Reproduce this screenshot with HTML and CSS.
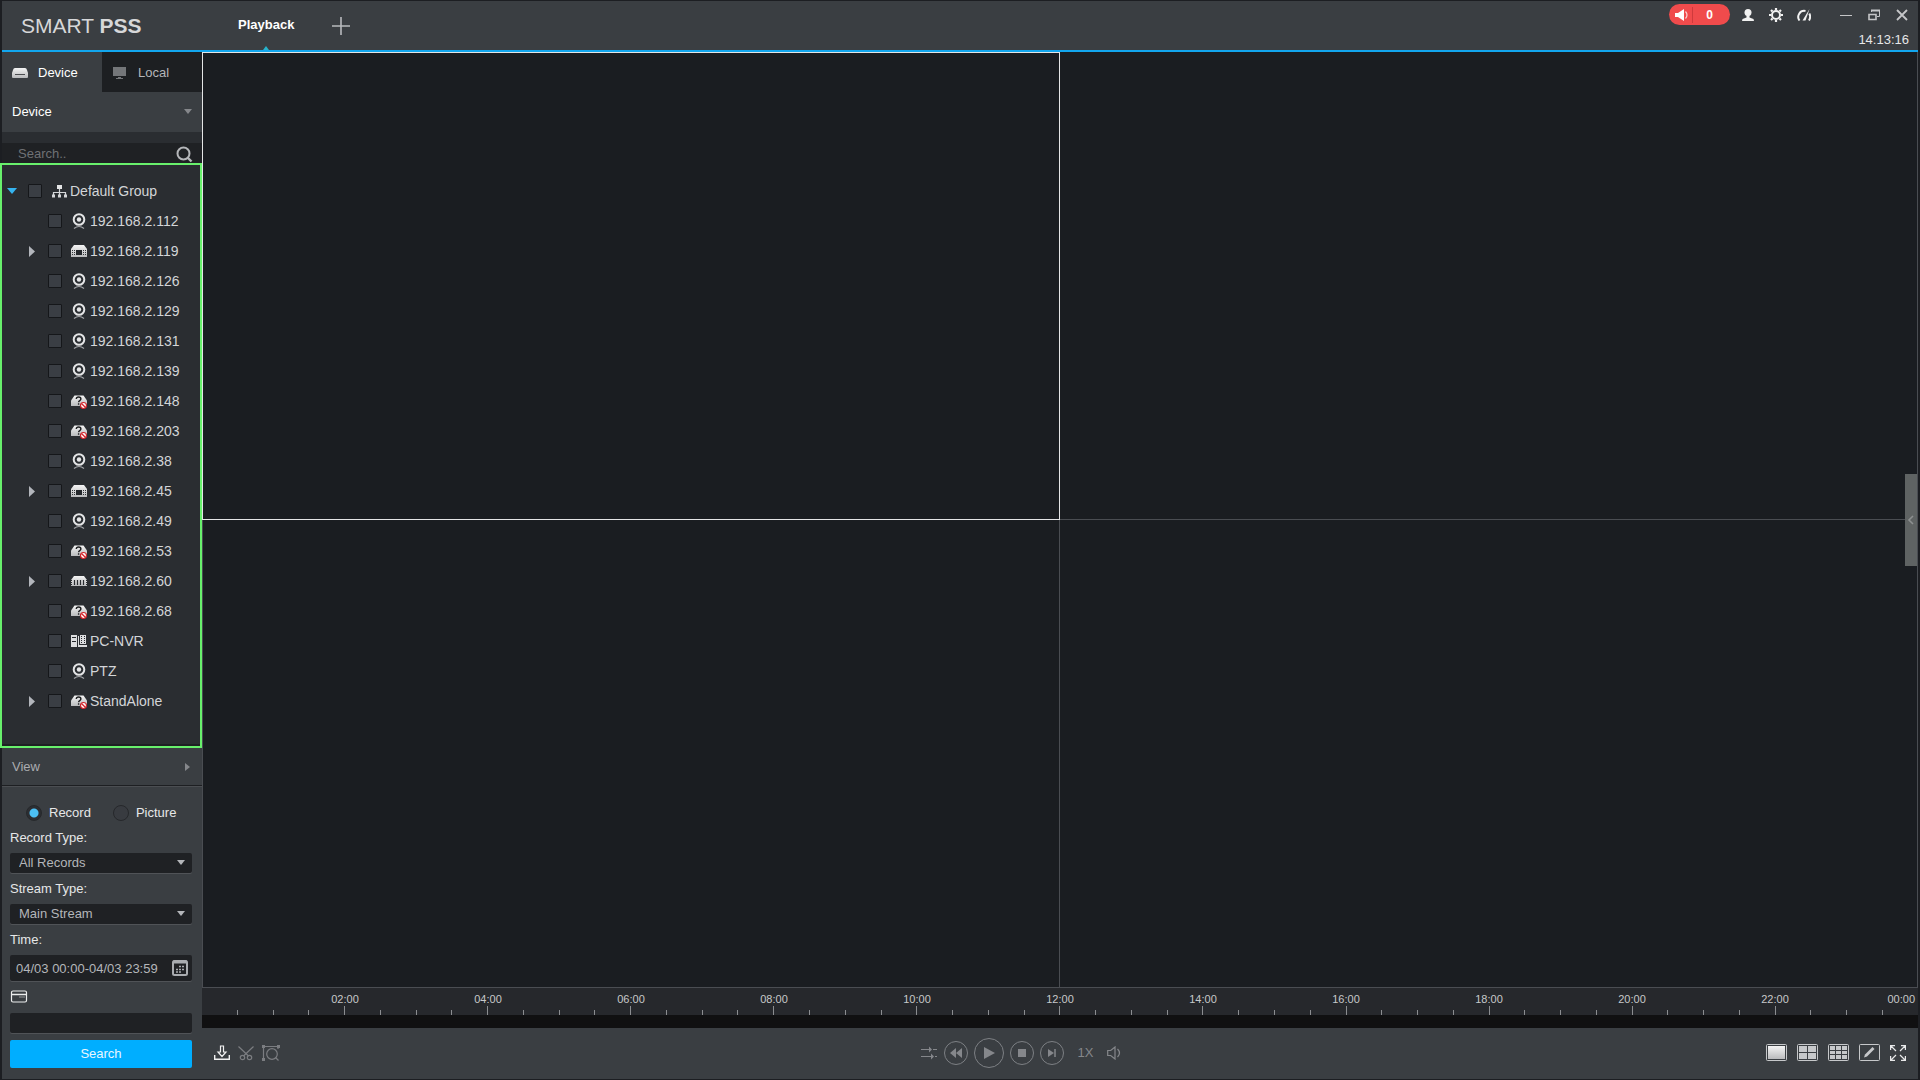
FILE: index.html
```html
<!DOCTYPE html>
<html lang="en">
<head>
<meta charset="utf-8">
<meta name="viewport" content="width=device-width, initial-scale=1">
<title>SMART PSS - Playback</title>
<link rel="stylesheet" href="styles.css">
</head>
<body>
<svg class="defs" width="0" height="0" aria-hidden="true">
  <defs>
    <linearGradient id="metal" x1="0" y1="0" x2="0" y2="1">
      <stop offset="0" stop-color="#f4f4f4"/><stop offset="1" stop-color="#b9babc"/>
    </linearGradient>
    <symbol id="cam" viewBox="0 0 16 16">
      <circle cx="8" cy="6.500" r="5.300" fill="none" stroke="#e4e5e6" stroke-width="2"/>
      <circle cx="8" cy="6.500" r="2.200" fill="#e4e5e6"/>
      <path d="M3 15.500Q8 11.500 13 15.500" fill="none" stroke="#a4a6a9" stroke-width="1.200"/>
    </symbol>
    <symbol id="nvr" viewBox="0 0 16 16">
      <path d="M3 2h10l3 4v8H0V6z" fill="url(#metal)"/>
      <path d="M5 7h6v5H5z" fill="#24272b"/>
      <path d="M1 7.500h3M1 9.500h3M1 11.500h3M12 7.500h3M12 9.500h3M12 11.500h3" stroke="#33363a" stroke-dasharray="1 1"/>
    </symbol>
    <symbol id="dvr" viewBox="0 0 16 16">
      <path d="M3 3h10l3 4v6H0V7z" fill="url(#metal)"/>
      <path d="M3.500 7v5M6.500 7v5M9.500 7v5M12.500 7v5" stroke="#2a2d31" stroke-width="1.200"/>
      <path d="M.5 7v6M15.500 7v6" stroke="#2a2d31" stroke-dasharray="1 1"/>
    </symbol>
    <symbol id="unknown" viewBox="0 0 16 16">
      <path d="M3.500 2.500h9L16 7.500V13H0V7.500z" fill="url(#metal)"/>
      <path d="M5.300 6c0-2.600 4.600-2.600 4.600 0 0 1.600-2.300 1.600-2.300 3.300M7.600 10.300v1.500" fill="none" stroke="#1c1e20" stroke-width="1.400"/>
      <circle cx="12.500" cy="12.500" r="3" fill="#fff" stroke="#d3242a" stroke-width="1.200"/>
      <path d="M10.500 10.500l4 4" stroke="#d3242a" stroke-width="1.300"/>
    </symbol>
    <symbol id="pcnvr" viewBox="0 0 16 16">
      <path d="M0 2h6v12H0zM9 2h6v9H9zM7 12h9v2H7z" fill="#dcdddf"/>
      <path d="M1 4.500h4M1 8.500h4" stroke="#24272b"/>
      <path d="M10.500 3v7M13.500 3v7" stroke="#24272b" stroke-dasharray="1 1"/>
      <path d="M7.500 3v9" stroke="#dcdddf"/>
    </symbol>
    <symbol id="right" viewBox="0 0 14 14"><path d="M4 2l6 5.500-6 5.500z" fill="#b3b6bc"/></symbol>
    <symbol id="down" viewBox="0 0 10 6"><path d="M1 0h8L5 5z" fill="currentColor"/></symbol>
  </defs>
</svg>

<div class="window">
  <header class="titlebar">
    <h1 class="brand">SMART <b>PSS</b></h1>
    <nav class="pages">
      <a class="page-tab" href="#playback">Playback</a>
      <button class="icon-btn" aria-label="New tab"><svg width="18" height="18"><path d="M9 0v18M0 9h18" stroke="#b8babd" stroke-width="1.600"/></svg></button>
    </nav>
    <div class="status">
      <div class="status-row">
        <button class="alarm" aria-label="Alarms">
          <svg width="14" height="12"><path d="M0 4h3l6-4v12L3 8H0z" fill="#fff"/><path d="M10.500 2.500q3 3.500 0 7" fill="none" stroke="#fbd0d0" stroke-width="1.200"/></svg>
          <span>0</span>
        </button>
        <button class="icon-btn" aria-label="User"><svg width="14" height="12"><circle cx="7" cy="3.500" r="3.500" fill="#f1f1f1"/><path d="M5.500 6h3v2.500l4 1.500.5 2H1l.5-2 4-1.500z" fill="#f1f1f1"/></svg></button>
        <button class="icon-btn" aria-label="Settings"><svg width="14" height="14"><circle cx="7" cy="7" r="4" fill="none" stroke="#f1f1f1" stroke-width="2"/><path d="M7 0v2M7 12v2M0 7h2M12 7h2M2 2l1.500 1.500M10.500 10.500L12 12M12 2l-1.500 1.500M3.500 10.500L2 12" stroke="#f1f1f1" stroke-width="2.200"/></svg></button>
        <button class="icon-btn" aria-label="System load"><svg width="14" height="12"><path d="M2.500 11.500A6 6 0 0 1 8.500 2M12.300 4.500A7 7 0 0 1 12 11.500" fill="none" stroke="#f1f1f1" stroke-width="2"/><path d="M12.500 0L8.500 11.500H5.500z" fill="#f1f1f1"/></svg></button>
        <button class="icon-btn first-control" aria-label="Minimize"><svg width="12" height="12"><path d="M0 6.500h12" stroke="#c5c6c8"/></svg></button>
        <button class="icon-btn" aria-label="Restore"><svg width="12" height="12"><path d="M3.500 3V1.500h8v6H9" fill="none" stroke="#c5c6c8"/><path d="M3 1.500h9" stroke="#c5c6c8" stroke-width="2"/><path d="M1 5.500h7v5H1z" fill="none" stroke="#c5c6c8" stroke-width="1.600"/></svg></button>
        <button class="icon-btn" aria-label="Close"><svg width="12" height="12"><path d="M1 1l10 10M11 1L1 11" stroke="#c5c6c8" stroke-width="1.800"/></svg></button>
      </div>
      <time class="clock">14:13:16</time>
    </div>
  </header>

  <div class="workspace">
    <aside class="sidebar">
      <div class="source-tabs">
        <button class="source-tab active"><svg width="16" height="12"><path d="M3 1h10q1.500 0 2 2l1 3v4q0 1-1 1H1q-1 0-1-1V6l1-3q.5-2 2-2z" fill="url(#metal)"/><path d="M3 7.500h10" stroke="#4b4d50"/></svg>Device</button>
        <button class="source-tab"><svg width="14" height="12"><path d="M1 0h13v9H1z" fill="#747679"/><path d="M6 10.500h3M4 11.500h7" stroke="#747679"/></svg>Local</button>
      </div>
      <button class="section-head">Device<svg class="dim" width="10" height="6"><use href="#down"/></svg></button>
      <div class="search">
        <input type="search" placeholder="Search.." aria-label="Search devices">
        <svg width="17" height="17"><circle cx="7.500" cy="7.500" r="6" fill="none" stroke="#b5b7ba" stroke-width="2"/><path d="M11.500 11.500l4 4" stroke="#b5b7ba" stroke-width="2.400"/></svg>
      </div>

      <ul class="tree">
        <li class="node root"><svg class="caret" width="14" height="14"><path d="M2 4h10L7 10z" fill="#35b4f0"/></svg><label><input type="checkbox"><svg width="16" height="16"><path d="M6 2h5v4H6z" fill="#e4e5e6"/><path d="M8.500 6v7M2.500 12V9.500h12V12" fill="none" stroke="#d4d6d8" stroke-width="1.200"/><path d="M1 11.500h3v3H1zM7 11.500h3v3H7zM13 11.500h3v3h-3z" fill="#d4d6d8"/></svg>Default Group</label></li>
        <li class="node"><span class="caret"></span><label><input type="checkbox"><svg width="16" height="16"><use href="#cam"/></svg>192.168.2.112</label></li>
        <li class="node"><svg class="caret" width="14" height="14"><use href="#right"/></svg><label><input type="checkbox"><svg width="16" height="16"><use href="#nvr"/></svg>192.168.2.119</label></li>
        <li class="node"><span class="caret"></span><label><input type="checkbox"><svg width="16" height="16"><use href="#cam"/></svg>192.168.2.126</label></li>
        <li class="node"><span class="caret"></span><label><input type="checkbox"><svg width="16" height="16"><use href="#cam"/></svg>192.168.2.129</label></li>
        <li class="node"><span class="caret"></span><label><input type="checkbox"><svg width="16" height="16"><use href="#cam"/></svg>192.168.2.131</label></li>
        <li class="node"><span class="caret"></span><label><input type="checkbox"><svg width="16" height="16"><use href="#cam"/></svg>192.168.2.139</label></li>
        <li class="node"><span class="caret"></span><label><input type="checkbox"><svg width="16" height="16"><use href="#unknown"/></svg>192.168.2.148</label></li>
        <li class="node"><span class="caret"></span><label><input type="checkbox"><svg width="16" height="16"><use href="#unknown"/></svg>192.168.2.203</label></li>
        <li class="node"><span class="caret"></span><label><input type="checkbox"><svg width="16" height="16"><use href="#cam"/></svg>192.168.2.38</label></li>
        <li class="node"><svg class="caret" width="14" height="14"><use href="#right"/></svg><label><input type="checkbox"><svg width="16" height="16"><use href="#nvr"/></svg>192.168.2.45</label></li>
        <li class="node"><span class="caret"></span><label><input type="checkbox"><svg width="16" height="16"><use href="#cam"/></svg>192.168.2.49</label></li>
        <li class="node"><span class="caret"></span><label><input type="checkbox"><svg width="16" height="16"><use href="#unknown"/></svg>192.168.2.53</label></li>
        <li class="node"><svg class="caret" width="14" height="14"><use href="#right"/></svg><label><input type="checkbox"><svg width="16" height="16"><use href="#dvr"/></svg>192.168.2.60</label></li>
        <li class="node"><span class="caret"></span><label><input type="checkbox"><svg width="16" height="16"><use href="#unknown"/></svg>192.168.2.68</label></li>
        <li class="node"><span class="caret"></span><label><input type="checkbox"><svg width="16" height="16"><use href="#pcnvr"/></svg>PC-NVR</label></li>
        <li class="node"><span class="caret"></span><label><input type="checkbox"><svg width="16" height="16"><use href="#cam"/></svg>PTZ</label></li>
        <li class="node"><svg class="caret" width="14" height="14"><use href="#right"/></svg><label><input type="checkbox"><svg width="16" height="16"><use href="#unknown"/></svg>StandAlone</label></li>
      </ul>

      <button class="section-head view">View<svg width="10" height="10"><path d="M2 1l5 4-5 4z" fill="#85878b"/></svg></button>

      <form class="query">
        <div class="kinds">
          <label><input type="radio" name="kind" checked>Record</label>
          <label><input type="radio" name="kind">Picture</label>
        </div>
        <div class="field">
          <label for="rtype">Record Type:</label>
          <div class="drop"><select id="rtype"><option>All Records</option></select><svg width="10" height="6"><use href="#down"/></svg></div>
        </div>
        <div class="field">
          <label for="stype">Stream Type:</label>
          <div class="drop"><select id="stype"><option>Main Stream</option></select><svg width="10" height="6"><use href="#down"/></svg></div>
        </div>
        <div class="field">
          <label for="time">Time:</label>
          <div class="range"><input id="time" type="text" value="04/03 00:00-04/03 23:59"><svg width="16" height="16"><rect x="1" y="1" width="14" height="14" rx="1.500" fill="none" stroke="#a9acb0" stroke-width="2"/><path d="M1 2h14" stroke="#a9acb0" stroke-width="3"/><path d="M7 6.500h5M4 9.500h8M4 12h5" stroke="#a9acb0" stroke-width="1.500" stroke-dasharray="2 1"/></svg></div>
        </div>
        <svg class="card" width="18" height="16"><rect x="1.500" y="2" width="15" height="11" rx="1.500" fill="none" stroke="#eceded" stroke-width="1.200"/><path d="M2 5.500h14" stroke="#eceded" stroke-width="1.500"/><path d="M9.500 8h6" stroke="#eceded" stroke-dasharray="1 1"/></svg>
        <div class="submit">
          <input class="box" type="text" aria-label="Card number">
          <button class="go" type="button">Search</button>
        </div>
      </form>
    </aside>

    <main class="stage">
      <section class="views" aria-label="Video views">
        <div class="cell selected"></div><div class="cell"></div><div class="cell"></div><div class="cell"></div>
        <button class="handle" aria-label="Expand panel"><svg width="8" height="10"><path d="M6 1L2 5l4 4" fill="none" stroke="#8d9090" stroke-width="1.600"/></svg></button>
      </section>
      <section class="timeline" aria-label="Timeline">
        <div class="hours">
          <span>02:00</span><span>04:00</span><span>06:00</span><span>08:00</span><span>10:00</span><span>12:00</span><span>14:00</span><span>16:00</span><span>18:00</span><span>20:00</span><span>22:00</span><span class="last">00:00</span>
        </div>
        <div class="ticks" aria-hidden="true">
          <i></i><i></i><i></i><i></i><i></i><i></i><i></i><i></i><i></i><i></i><i></i><i></i>
          <i></i><i></i><i></i><i></i><i></i><i></i><i></i><i></i><i></i><i></i><i></i><i></i>
          <i></i><i></i><i></i><i></i><i></i><i></i><i></i><i></i><i></i><i></i><i></i><i></i>
          <i></i><i></i><i></i><i></i><i></i><i></i><i></i><i></i><i></i><i></i><i></i><i></i>
        </div>
        <div class="track"></div>
      </section>
      <footer class="toolbar">
        <div class="tools">
          <button class="icon-btn" aria-label="Export"><svg width="16" height="16"><path d="M6.500 1h3v6H12l-4 4.500L4 7h2.500z" fill="none" stroke="#f0f0f0" stroke-width="1.200"/><path d="M.7 10v4.300h14.600V10" fill="none" stroke="#f0f0f0" stroke-width="1.400"/></svg></button>
          <button class="icon-btn" aria-label="Clip"><svg width="16" height="16" fill="none" stroke="#7b7d81" stroke-width="1.200"><path d="M.5 1.500L10.500 11M15.500 1.500L5.500 11"/><circle cx="4.500" cy="12.500" r="2.200"/><circle cx="11.500" cy="12.500" r="2.200"/></svg></button>
          <button class="icon-btn" aria-label="Smart search"><svg width="18" height="18" fill="none" stroke="#7b7d81" stroke-width="1.200"><path d="M1.500 15V2.500H16V5"/><path d="M0 1h3v3H0zM15 1h3v3h-3zM0 14h3v3H0z" fill="#7b7d81" stroke="none"/><circle cx="10" cy="10" r="5.300"/><path d="M13.500 13.500l3 3"/></svg></button>
        </div>
        <div class="player">
          <button class="icon-btn sync" aria-label="Sync"><svg width="16" height="14"><path d="M0 3.500h8M12 3.500h4M0 10.500h10M14 10.500h2" stroke="#85878b"/><path d="M8 .5l3 3-3 3zM10 7.500l3 3-3 3z" fill="#85878b"/></svg></button>
          <button class="round" aria-label="Slow"><svg width="12" height="10"><path d="M6 0v10L0 5zM12 0v10L6 5z" fill="#85878b"/></svg></button>
          <button class="round big" aria-label="Play"><svg width="12" height="12"><path d="M1 0l11 6-11 6z" fill="#85878b"/></svg></button>
          <button class="round" aria-label="Stop"><svg width="8" height="8"><path d="M0 0h8v8H0z" fill="#85878b"/></svg></button>
          <button class="round" aria-label="Next frame"><svg width="10" height="10"><path d="M1 1l6 4-6 4z" fill="#85878b"/><path d="M8 1v8" stroke="#85878b" stroke-width="1.500"/></svg></button>
          <span class="speed">1X</span>
          <button class="icon-btn" aria-label="Volume"><svg width="14" height="14" fill="none" stroke="#85878b" stroke-width="1.200"><path d="M.7 4.500h3L8 1v12L3.700 9.500h-3z"/><path d="M10.500 3q4 4 0 8"/></svg></button>
        </div>
        <div class="layouts">
          <button class="icon-btn" aria-label="One view"><svg width="21" height="17"><rect x=".5" y=".5" width="20" height="16" rx="1" fill="none" stroke="#c6c8ca"/><path d="M2 2h17v13H2z" fill="url(#metal)"/></svg></button>
          <button class="icon-btn" aria-label="Four views"><svg width="21" height="17"><rect x=".5" y=".5" width="20" height="16" rx="1" fill="none" stroke="#c6c8ca"/><path d="M2 2h8v6H2zM11 2h8v6h-8zM2 9h8v6H2zM11 9h8v6h-8z" fill="#c6c8ca"/></svg></button>
          <button class="icon-btn" aria-label="Nine views"><svg width="21" height="17"><rect x=".5" y=".5" width="20" height="16" rx="1" fill="none" stroke="#c6c8ca"/><path d="M2 2h5v4H2zM8 2h5v4H8zM14 2h5v4h-5zM2 7h5v3H2zM8 7h5v3H8zM14 7h5v3h-5zM2 11h5v4H2zM8 11h5v4H8zM14 11h5v4h-5z" fill="#c6c8ca"/></svg></button>
          <button class="icon-btn" aria-label="Custom layout"><svg width="21" height="17"><rect x=".5" y=".5" width="20" height="16" rx="1" fill="none" stroke="#c6c8ca"/><path d="M5 13.500l1-3L13.500 3l2 2L8 12.500z" fill="#c6c8ca"/></svg></button>
          <button class="icon-btn" aria-label="Full screen"><svg width="16" height="16" fill="none" stroke="#e8e9ea" stroke-width="1.200"><path d="M.6 5V.6H5M11 .6h4.400V5M15.400 11v4.400H11M5 15.400H.6V11M1 1l5 5M15 1l-5 5M15 15l-5-5M1 15l5-5"/></svg></button>
        </div>
      </footer>
    </main>
  </div>
</div>
</body>
</html>
```
FILE: styles.css
```css
* { box-sizing: border-box; }

body {
  margin: 0;
  background: #1c1e22;
  color: #e6e7e8;
  font: 13px/16px "Liberation Sans", Arial, sans-serif;
}

.defs { position: absolute; }

svg { display: block; flex: none; }

button, input, select { font: inherit; color: inherit; }

button {
  padding: 0;
  border: 0;
  background: none;
  cursor: pointer;
}

.icon-btn { display: flex; align-items: center; justify-content: center; }

.window {
  display: flex;
  flex-direction: column;
  min-height: 100vh;
  padding: 1px 2px 1px 0;
}

/* Title bar */
.titlebar {
  display: flex;
  height: 51px;
  margin-left: 2px;
  padding-left: 19px;
  background: #3a3e42;
  border-bottom: 2px solid #12a6ee;
}

.brand {
  width: 217px;
  margin: 0;
  color: #d6d7d9;
  font-size: 21px;
  font-weight: 400;
  line-height: 50px;
}

.pages { display: flex; align-items: center; gap: 38px; flex: 1; }

.page-tab {
  position: relative;
  align-self: stretch;
  color: #fff;
  font-size: 13px;
  font-weight: 700;
  line-height: 47px;
  text-decoration: none;
}

.page-tab::after {
  content: "";
  position: absolute;
  bottom: 0;
  left: 50%;
  margin-left: -3px;
  border: 3px solid transparent;
  border-top: 0;
  border-bottom: 4px solid #27b3cc;
}

.status {
  display: flex;
  flex-direction: column;
  align-items: flex-end;
  gap: 7px;
  padding: 3px 9px 0 0;
}

.status-row { display: flex; align-items: center; gap: 14px; height: 21px; }

.status-row .first-control { margin-left: 14px; }

.status-row .icon-btn { min-width: 14px; }

.alarm {
  display: flex;
  align-items: center;
  width: 61px;
  height: 21px;
  margin-right: -3px;
  padding-left: 6px;
  border-radius: 11px;
  background: #f04b4c;
  color: #fff;
  font-size: 12px;
  font-weight: 700;
}

.alarm span {
  flex: 1;
  margin: 0 4px 0 3px;
  border-left: 1px solid #cf3a3c;
}

.clock { line-height: 16px; }

/* Workspace */
.workspace { display: flex; flex: 1; }

.sidebar {
  display: flex;
  flex-direction: column;
  flex: none;
  width: 202px;
  padding-left: 2px;
  background: linear-gradient(90deg, #1c1e22 0 2px, #3a3e42 2px);
}

.source-tabs { display: grid; grid-template-columns: 1fr 1fr; }

.source-tab {
  display: flex;
  align-items: center;
  gap: 10px;
  height: 40px;
  padding: 1px 0 0 10px;
  background: #1d1f22;
  color: #b4b6b9;
}

.source-tab svg { width: 16px; }

.source-tab.active { background: #3a3e42; color: #fff; }

.section-head {
  display: flex;
  align-items: center;
  justify-content: space-between;
  height: 40px;
  padding: 0 9px 0 10px;
  color: #fff;
}

.dim { color: #85878b; }

.search {
  display: flex;
  align-items: center;
  height: 31px;
  padding: 2px 9px 0 0;
  border-top: 11px solid #2a2d31;
  background: #1f2124;
}

.search input {
  flex: 1;
  min-width: 0;
  padding: 0 16px;
  border: 0;
  outline: 0;
  background: none;
}

.search input::placeholder { color: #6f7175; opacity: 1; }

.tree {
  flex: 1;
  margin: 0 0 0 -2px;
  padding: 11px 0 0 3px;
  border: 2px solid #68f06c;
  background: #2a2d31;
  box-shadow: inset 0 -2px #1e2023;
  list-style: none;
}

.node {
  display: flex;
  align-items: center;
  gap: 9px;
  height: 30px;
  padding-left: 20px;
  color: #d3d5d8;
  font-size: 14px;
}

.node.root { padding-left: 0; }

.caret { width: 14px; }

.node label { display: flex; align-items: center; gap: 3px; }

.node input {
  appearance: none;
  width: 14px;
  height: 14px;
  margin: 0 6px 0 0;
  border: 1px solid #15171a;
  border-radius: 1px;
  background: #3a3e44;
}

.section-head.view {
  height: 38px;
  border-bottom: 1px solid #1d1f22;
  color: #aaacb0;
}

/* Query form */
.query {
  display: flex;
  flex-direction: column;
  gap: 8px;
  padding: 17px 10px 11px 8px;
  border-top: 1px solid #4b4e52;
}

.kinds { display: flex; gap: 22px; height: 18px; padding-left: 16px; }

.kinds label { display: flex; align-items: center; gap: 7px; }

.kinds input {
  appearance: none;
  width: 16px;
  height: 16px;
  margin: 0;
  border: 1px solid #26282b;
  border-radius: 50%;
  background: #383b40;
}

.kinds input:checked {
  background: radial-gradient(circle, #4cc0f4 0 4px, #2c2e32 5px);
}

.field, .submit { display: flex; flex-direction: column; gap: 7px; }

.drop, .range { display: grid; align-items: center; color: #b4b6ba; }

.drop select, .range input, .box {
  appearance: none;
  width: 100%;
  height: 20px;
  padding: 0 9px;
  border: 0;
  border-radius: 2px;
  outline: 0;
  background: #1f2124;
  box-shadow: 0 1px #505357;
}

.drop > *, .range > * { grid-area: 1 / 1; }

.drop svg, .range svg { justify-self: end; margin-right: 6px; pointer-events: none; }

.range svg { margin-right: 4px; }

.range input { height: 26px; padding: 0 24px 0 6px; }

.go {
  height: 28px;
  border-radius: 2px;
  background: #00aeff;
  color: #e8f7ff;
}

/* Stage */
.stage { display: flex; flex-direction: column; flex: 1; min-width: 0; }

.views {
  position: relative;
  display: grid;
  grid-template: 1fr 1fr / 1fr 1fr;
  flex: 1;
  border-bottom: 1px solid #4a4d52;
  background: #1a1d21;
}

.cell:nth-child(1) { border: 1px solid #e4e5e6; }
.cell:nth-child(2) {
  border: 1px solid #4a4d52;
  border-width: 0 1px 1px 0;
}
.cell:nth-child(3) {
  border: 1px solid #4a4d52;
  border-width: 0 1px 0 1px;
}
.cell:nth-child(4) { border-right: 1px solid #4a4d52; }

.handle {
  position: absolute;
  top: 50%;
  right: 1px;
  display: flex;
  align-items: center;
  justify-content: center;
  width: 12px;
  height: 92px;
  background: #5f6363;
  transform: translateY(-50%);
}

.timeline { background: #26282c; }

.hours {
  display: grid;
  grid-template-columns: repeat(24, 1fr);
  height: 18px;
  padding-top: 3px;
  color: #c6c8ca;
  font-size: 11px;
  text-align: center;
}

.hours span { grid-column: span 2; }
.hours span:first-child { grid-column: 2 / span 2; }
.hours .last { grid-column: span 1; padding-right: 3px; text-align: right; }

.ticks { display: flex; align-items: flex-end; height: 9px; }

.ticks i { flex: 1; height: 5px; border-right: 1px solid #8b8d90; }
.ticks i:nth-child(4n) { height: 9px; }
.ticks i:last-child { border: 0; }

.track { height: 13px; background: #101011; }

.toolbar {
  display: flex;
  align-items: center;
  justify-content: space-between;
  height: 51px;
  padding: 0 12px 2px;
  background: #3a3e42;
}

.tools { display: flex; gap: 8px; }

.player { display: flex; align-items: center; gap: 6px; padding-right: 4px; }

.sync { margin-right: 1px; }

.round {
  display: flex;
  align-items: center;
  justify-content: center;
  width: 24px;
  height: 24px;
  border: 1px solid #7d8084;
  border-radius: 50%;
}

.round.big { width: 30px; height: 30px; }

.speed { margin: 0 8px; color: #85878b; }

.layouts { display: flex; align-items: center; gap: 10px; }
```
